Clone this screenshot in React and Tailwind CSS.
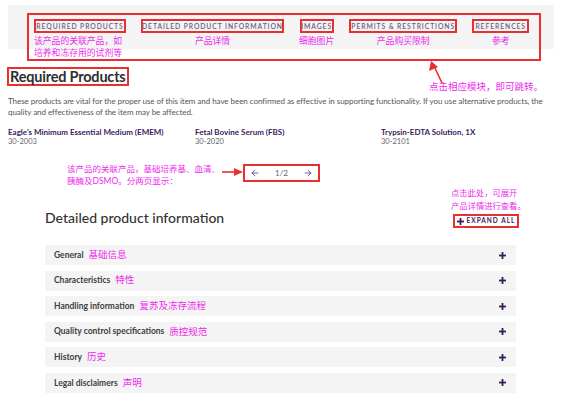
import { ArrowLeft, ArrowRight } from "lucide-react";

const navItems = [
  { label: "REQUIRED PRODUCTS", w: "w-[92px]", note: ["该产品的关联产品，如", "培养和冻存用的试剂等"], left: true },
  { label: "DETAILED PRODUCT INFORMATION", w: "w-[143px]", note: ["产品详情"] },
  { label: "IMAGES", w: "w-[34px]", note: ["细胞图片"] },
  { label: "PERMITS & RESTRICTIONS", w: "w-[108px]", note: ["产品购买限制"] },
  { label: "REFERENCES", w: "w-[57px]", note: ["参考"] },
];

const products = [
  { name: "Eagle's Minimum Essential Medium (EMEM)", code: "30-2003" },
  { name: "Fetal Bovine Serum (FBS)", code: "30-2020" },
  { name: "Trypsin-EDTA Solution, 1X", code: "30-2101" },
];

const sections = [
  { en: "General", zh: "基础信息" },
  { en: "Characteristics", zh: "特性" },
  { en: "Handling information", zh: "复苏及冻存流程" },
  { en: "Quality control specifications", zh: "质控规范" },
  { en: "History", zh: "历史" },
  { en: "Legal disclaimers", zh: "声明" },
];

const Plus = () => (
  <svg width="7" height="7" viewBox="0 0 7 7">
    <rect x="2.6" y="0" width="1.8" height="7" fill="#3b1a5e" />
    <rect x="0" y="2.6" width="7" height="1.8" fill="#3b1a5e" />
  </svg>
);

const App = () => {
  return (
    <div
      className="relative w-[562px] h-[399px] overflow-hidden bg-white px-2"
      style={{ fontFamily: "Lato, 'Noto Sans CJK SC', sans-serif" }}
    >
      {/* top nav band */}
      <div className="mt-[5px] h-[44px] bg-[#f4f4f4] pt-[8px]">
        <div className="ml-[19px] w-[514px] h-[48px] border-2 border-[#e8302f] flex items-start gap-[15px] pl-[5px] pt-[4px]">
          {navItems.map((item) => (
            <div key={item.label} className={`flex flex-col ${item.left ? "items-start" : "items-center"}`}>
              <div
                className={`${item.w} h-[14px] border-2 border-[#e8302f] flex items-center justify-center whitespace-nowrap text-[6.8px] tracking-[0.9px] font-semibold text-[#6a5a88]`}
              >
                {item.label}
              </div>
              <div className="pt-[2px] text-[8.8px] leading-[12px] text-[#ee2bee] whitespace-nowrap">
                {item.note.map((n) => (
                  <div key={n}>{n}</div>
                ))}
              </div>
            </div>
          ))}
        </div>
      </div>

      {/* annotation arrow to nav */}
      <svg className="absolute left-[426px] top-[58px]" width="20" height="28" viewBox="0 0 20 28">
        <line x1="16" y1="25" x2="8" y2="8" stroke="#e8302f" strokeWidth="1.6" />
        <polygon points="5,3 3,13 12,9" fill="#e8302f" />
      </svg>

      {/* Required products heading */}
      <div className="mt-[18px] flex items-end">
        <div className="ml-[-1px] h-[19px] border-2 border-[#e8302f] flex items-center px-[1px]">
          <h2 className="text-[14.5px] leading-[19px] font-bold text-[#2f2f2f] tracking-[-0.2px]">Required Products</h2>
        </div>
        <div className="ml-auto mr-[11px] mb-[-8px] text-[9.5px] text-[#ee2bee]">点击相应模块，即可跳转。</div>
      </div>

      <p className="mt-[10px] text-[8px] leading-[11px] text-[#555] tracking-[-0.05px]">
        These products are vital for the proper use of this item and have been confirmed as effective in supporting functionality. If you use alternative products, the quality and effectiveness of the item may be affected.
      </p>

      <div className="mt-[8.5px] grid grid-cols-[187px_186px_1fr]">
        {products.map((p) => (
          <div key={p.code}>
            <div className="text-[8px] leading-[10px] font-bold text-[#3b1a5e]">{p.name}</div>
            <div className="text-[7.5px] leading-[10px] text-[#666]">{p.code}</div>
          </div>
        ))}
      </div>

      {/* pagination */}
      <div className="mt-[16px] flex items-start ml-[59px]">
        <div className="text-[8.5px] leading-[12px] text-[#ee2bee] w-[155px] whitespace-nowrap">
          <div>该产品的关联产品，基础培养基、血清、</div>
          <div>胰酶及DSMO。分两页显示：</div>
        </div>
        <svg className="mt-[4px]" width="21" height="10" viewBox="0 0 21 10">
          <line x1="0" y1="5" x2="14" y2="5" stroke="#e8302f" strokeWidth="1.6" />
          <polygon points="12,1 21,5 12,9" fill="#e8302f" />
        </svg>
        <div className="mt-[1px] w-[77px] h-[18px] border-2 border-[#e8302f] flex items-center justify-between px-[5px]">
          <ArrowLeft size={10} strokeWidth={2} color="#5b3d82" />
          <span className="text-[8px] text-[#666]">1/2</span>
          <ArrowRight size={10} strokeWidth={2} color="#5b3d82" />
        </div>
      </div>

      {/* detailed product information */}
      <div className="ml-[37px] w-[474px]">
        <div className="flex items-end justify-between">
          <h2 className="mb-0 text-[14px] leading-[20px] font-medium text-[#333]">Detailed product information</h2>
          <div className="w-[68px] flex flex-col items-start">
            <div className="text-[8.3px] leading-[13px] text-[#ee2bee] whitespace-nowrap">
              <div>点击此处，可展开</div>
              <div>产品详情进行查看。</div>
            </div>
            <div className="mt-[1.5px] ml-[2px] w-[66px] h-[14px] border-2 border-[#e8302f] flex items-center justify-center gap-[3px] text-[6.5px] tracking-[1px] font-bold text-[#3b1a5e]">
              <Plus />
              EXPAND ALL
            </div>
          </div>
        </div>

        <div className="mt-[17px] w-[471px] flex flex-col gap-[5.6px]">
          {sections.map((s) => (
            <div key={s.en} className="h-[20px] bg-[#f4f4f4] flex items-center pl-[9px] pr-[10px]">
              <span className="text-[8.5px] font-bold text-[#3d3d3d]">{s.en}</span>
              <span className="ml-[5px] text-[9.5px] text-[#ee2bee]">{s.zh}</span>
              <span className="ml-auto">
                <Plus />
              </span>
            </div>
          ))}
        </div>
      </div>
    </div>
  );
};

export default App;
